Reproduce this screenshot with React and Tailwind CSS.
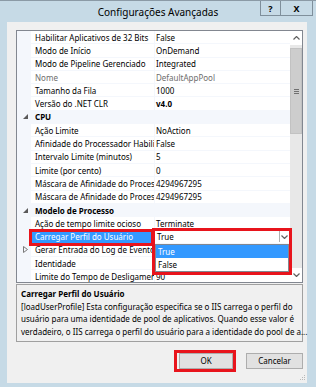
import React from "react";

const rows = [
  { n: "Habilitar Aplicativos de 32 Bits", v: "False" },
  { n: "Modo de Início", v: "OnDemand" },
  { n: "Modo de Pipeline Gerenciado", v: "Integrated" },
  { n: "Nome", v: "DefaultAppPool", dis: true },
  { n: "Tamanho da Fila", v: "1000" },
  { n: "Versão do .NET CLR", v: "v4.0", bold: true },
  { cat: "CPU" },
  { n: "Ação Limite", v: "NoAction" },
  { n: "Afinidade do Processador Habili", v: "False" },
  { n: "Intervalo Limite (minutos)", v: "5" },
  { n: "Limite (por cento)", v: "0" },
  { n: "Máscara de Afinidade do Proces", v: "4294967295" },
  { n: "Máscara de Afinidade do Proces", v: "4294967295" },
  { cat: "Modelo de Processo" },
  { n: "Ação de tempo limite ocioso", v: "Terminate" },
  { n: "Carregar Perfil do Usuário", v: "True", sel: true },
  { n: "Gerar Entrada do Log de Evento", v: "", collapsed: true },
  { n: "Identidade", v: "" },
  { n: "Limite do Tempo de Desligamen", v: "90" },
];

function Expanded() {
  return (
    <svg width="5" height="5" viewBox="0 0 5 5">
      <polygon points="5,0 5,5 0,5" fill="#5a5a5a" />
    </svg>
  );
}

function Collapsed() {
  return (
    <svg width="5" height="7" viewBox="0 0 5 7">
      <polygon points="0.5,0.5 4.5,3.5 0.5,6.5" fill="none" stroke="#7a7a7a" strokeWidth="1" />
    </svg>
  );
}

function Chevron({ up }) {
  return (
    <svg width="7" height="4" viewBox="0 0 7 4">
      <polyline
        points={up ? "0.5,3.5 3.5,0.5 6.5,3.5" : "0.5,0.5 3.5,3.5 6.5,0.5"}
        fill="none"
        stroke="#606060"
        strokeWidth="1.2"
      />
    </svg>
  );
}

function Row({ r }) {
  if (r.cat) {
    return (
      <div className="flex h-[13.3px] shrink-0 items-center bg-[#f4f7fc] border-b border-[#f4f7fc]">
        <div className="flex w-[14px] shrink-0 items-center justify-center pl-[3px]">
          <Expanded />
        </div>
        <div className="pl-[4px] pt-[1px] font-bold leading-none">{r.cat}</div>
      </div>
    );
  }
  return (
    <div className="flex h-[13.3px] shrink-0 border-b border-[#f4f7fc]">
      <div className="flex w-[14px] shrink-0 items-center justify-center bg-[#f4f7fc] pl-[2px]">
        {r.collapsed ? <Collapsed /> : null}
      </div>
      <div
        className={
          "flex w-[123px] shrink-0 items-center overflow-hidden whitespace-nowrap pl-[4px] pt-[1px] leading-none " +
          (r.sel ? "bg-[#3399ff] text-white" : r.dis ? "text-[#6d6d6d]" : "text-black")
        }
      >
        {r.n}
      </div>
      <div className="w-px shrink-0 bg-[#f4f7fc]" />
      <div
        className={
          "flex min-w-0 flex-1 items-center overflow-hidden whitespace-nowrap pl-[1px] leading-none " +
          (r.sel ? "" : "pt-[1px] ") +
          (r.dis ? "text-[#6d6d6d] " : "text-black ") +
          (r.bold ? "font-bold" : "")
        }
      >
        {r.sel ? (
          <div className="flex h-full w-full items-center justify-between bg-white">
            <span className="pl-[1px] pt-[1px]">True</span>
            <div className="mr-[1px] flex h-[11px] w-[10px] items-center justify-center border-l border-[#b0b0b0] bg-white">
              <Chevron />
            </div>
          </div>
        ) : (
          r.v
        )}
      </div>
    </div>
  );
}

export default function App() {
  return (
    <div
      className="relative h-[387px] w-[316px] overflow-hidden bg-[#c6dae6] text-[8px] text-black"
      style={{ fontFamily: '"Noto Sans", "Open Sans", sans-serif' }}
    >
      {/* title bar */}
      <div className="flex h-[22px] items-start border-t border-[#8b9aa6]">
        <div className="w-[56px] shrink-0" />
        <div className="flex-1 pt-[3px] text-center text-[10px] leading-[16px] text-black">
          Configurações Avançadas
        </div>
        <div className="mr-[3px] flex h-[15px] shrink-0">
          <div className="flex w-[21px] items-center justify-center border border-t-0 border-[#7f8f9b] text-[9px] font-bold leading-none">
            ?
          </div>
          <div className="flex w-[32px] items-center justify-center border border-t-0 border-l-0 border-[#7f8f9b] text-[9px] font-bold leading-none">
            X
          </div>
        </div>
      </div>

      {/* client area */}
      <div className="relative ml-[7px] mr-[9px] flex h-[361px] flex-col bg-[#f0f0f0] pl-[9px] pr-[4px] pt-[8px]">
        {/* property grid */}
        <div className="flex h-[253px] shrink-0 border border-[#828790] bg-white">
          <div className="flex min-w-0 flex-1 flex-col overflow-hidden">
            {rows.map((r, i) => (
              <Row key={i} r={r} />
            ))}
          </div>
          <div className="flex w-[12px] shrink-0 flex-col bg-[#e8e8e8]">
            <div className="flex h-[14px] items-center justify-center bg-white">
              <Chevron up />
            </div>
            <div className="mt-[3px] flex h-[86px] items-center justify-center border border-[#c2c2c2] bg-[#cdcdcd]">
              <div className="flex flex-col gap-[1px]">
                <div className="h-px w-[5px] bg-[#707070]" />
                <div className="h-px w-[5px] bg-[#707070]" />
                <div className="h-px w-[5px] bg-[#707070]" />
              </div>
            </div>
            <div className="flex-1" />
            <div className="flex h-[14px] items-center justify-center bg-white">
              <Chevron />
            </div>
          </div>
        </div>

        {/* description */}
        <div className="mt-[1px] h-[58px] shrink-0 border border-[#a0a0a0] bg-[#f0f0f0] pl-[4px] pt-[3px] leading-[12.5px]">
          <div className="font-bold">Carregar Perfil do Usuário</div>
          <div className="whitespace-nowrap">
            [loadUserProfile] Esta configuração especifica se o IIS carrega o perfil do
          </div>
          <div className="whitespace-nowrap">
            usuário para uma identidade de pool de aplicativos. Quando esse valor é
          </div>
          <div className="whitespace-nowrap">
            verdadeiro, o IIS carrega o perfil do usuário para a identidade do pool de a...
          </div>
        </div>

        {/* buttons */}
        <div className="mt-[11px] flex justify-end gap-[13px]">
          <div className="flex h-[16px] w-[54px] items-center justify-center border border-[#adadad] bg-[#e1e1e1] leading-none">
            OK
          </div>
          <div className="flex h-[16px] w-[57px] items-center justify-center border border-[#adadad] bg-[#e1e1e1] leading-none">
            Cancelar
          </div>
        </div>

        {/* size grip */}
        <svg className="absolute bottom-[2px] right-[1px]" width="6" height="6" viewBox="0 0 6 6">
          <rect x="4" y="0" width="1" height="1" fill="#b8b8b8" />
          <rect x="2" y="2" width="1" height="1" fill="#b8b8b8" />
          <rect x="4" y="2" width="1" height="1" fill="#b8b8b8" />
          <rect x="0" y="4" width="1" height="1" fill="#b8b8b8" />
          <rect x="2" y="4" width="1" height="1" fill="#b8b8b8" />
          <rect x="4" y="4" width="1" height="1" fill="#b8b8b8" />
        </svg>
      </div>

      {/* dropdown list overlay */}
      <div className="absolute left-[155px] top-[244px] flex w-[134px] flex-col border border-[#828790] bg-white leading-none">
        <div className="flex h-[13px] items-center bg-[#3399ff] pl-[2px] pt-[1px] text-white">True</div>
        <div className="flex h-[13px] items-center pl-[2px] pt-[1px]">False</div>
      </div>

      {/* red annotation boxes */}
      <div className="pointer-events-none absolute left-[29px] top-[229px] h-[17px] w-[125px] border-[3px] border-[#e8141c]" />
      <div className="pointer-events-none absolute left-[152px] top-[228px] h-[47px] w-[140px] border-[3px] border-[#e8141c]" />
      <div className="pointer-events-none absolute left-[174px] top-[350px] h-[22px] w-[62px] border-[3px] border-[#e8141c]" />
    </div>
  );
}
